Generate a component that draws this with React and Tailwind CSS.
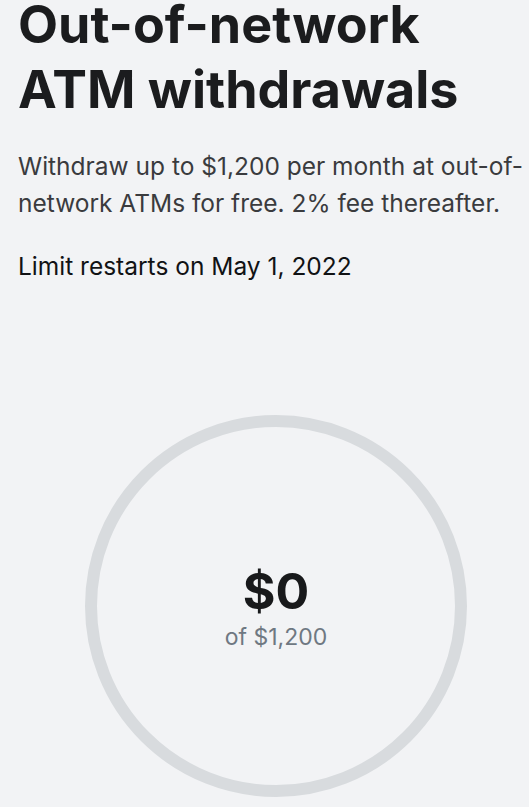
import React from 'react';

const App = () => {
    return (
        <div className="min-h-screen w-full bg-[#f2f3f5] overflow-hidden" style={{ fontFamily: 'Inter, "Noto Sans", sans-serif' }}>
            <div className="pl-[18px] pr-[2px]">
                <h1 className="-mt-[8px] text-[52px] leading-[65px] font-bold text-[#1b1c1e]">
                    Out-of-network
                    <br />
                    ATM withdrawals
                </h1>

                <p className="mt-[26px] text-[24.5px] leading-[37px] text-[#3a3b3e]">
                    Withdraw up to $1,200 per month at out-of-network ATMs for free. 2% fee thereafter.
                </p>

                <p className="mt-[26px] text-[24.5px] leading-[37px] text-[#111214]">
                    Limit restarts on May 1, 2022
                </p>
            </div>

            <div className="mt-[130px] flex justify-center pl-[23px]">
                <div className="w-[382px] h-[382px] rounded-full border-[12px] border-[#d8dbde] flex flex-col items-center justify-center">
                    <div className="mt-[2px] text-[50px] leading-[54px] font-bold text-[#18191b]">$0</div>
                    <div className="mt-[5px] text-[23px] leading-[28px] text-[#6f7882]">of $1,200</div>
                </div>
            </div>
        </div>
    );
};

export default App;
